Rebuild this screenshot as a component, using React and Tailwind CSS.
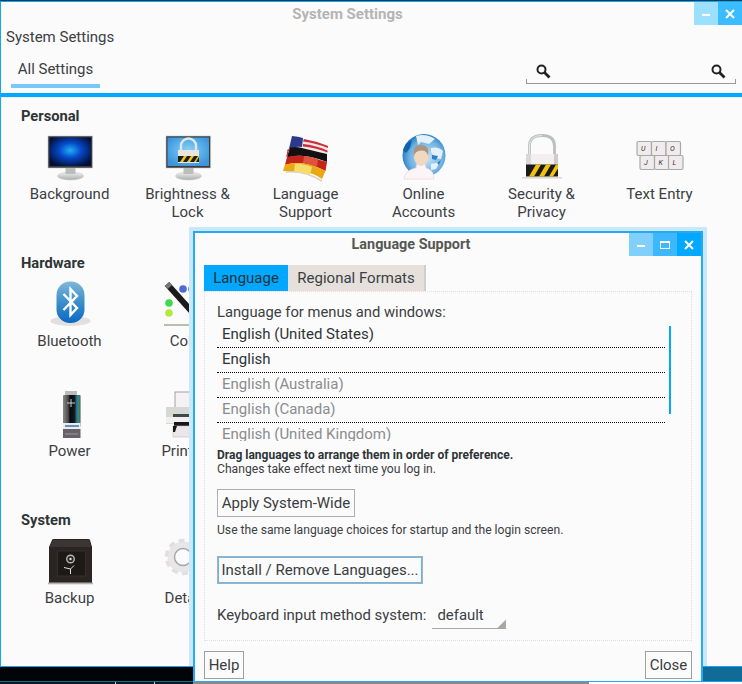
import React from "react";

const font = { fontFamily: "Roboto, sans-serif" };

// small window control buttons, the kind comes from the title bar they sit in
const WinBtn = ({ tone, kind }) => (
  <div className={`w-6 h-full flex items-center justify-center ${tone}`}>
    {kind === "min" && <div className="w-2 h-[2px] bg-white mt-[3px]" />}
    {kind === "max" && <div className="w-[10px] h-2 border border-white border-t-2" />}
    {kind === "close" && (
      <svg width="10" height="10" viewBox="0 0 10 10">
        <path d="M1 1 9 9M9 1 1 9" stroke="#fff" strokeWidth="2" />
      </svg>
    )}
  </div>
);

const SearchGlyph = () => (
  <svg width="15" height="15" viewBox="0 0 15 15">
    <circle cx="5.5" cy="5.5" r="4" fill="none" stroke="#222" strokeWidth="2" />
    <path d="M8.500 8.500 13.500 13.500" stroke="#222" strokeWidth="2.800" />
  </svg>
);

const Monitor = ({ children, id, stops }) => (
  <svg width="48" height="48" viewBox="0 0 48 48">
    <defs>
      <radialGradient id={id} cx="50%" cy="45%" r="60%">
        {stops.map((s, i) => (
          <stop key={i} offset={s[0]} stopColor={s[1]} />
        ))}
      </radialGradient>
      <linearGradient id={id + "b"} x1="0" y1="0" x2="0" y2="1">
        <stop offset="0" stopColor="#f2f2f2" />
        <stop offset="1" stopColor="#a9aeab" />
      </linearGradient>
    </defs>
    <ellipse cx="24.5" cy="42" rx="13" ry="4" fill={`url(#${id}b)`} stroke="#c5c8c6" strokeWidth="0.5" />
    <rect x="19.5" y="33" width="10" height="7" fill="#b9bdbb" />
    <rect x="2" y="2" width="44.5" height="32" fill="#3a3d40" stroke="#c8c4c4" strokeWidth="0.6" />
    <rect x="3.5" y="3.5" width="41.5" height="28.5" fill={`url(#${id})`} />
    {children}
  </svg>
);

const BackgroundIcon = () => (
  <Monitor id="bgm" stops={[[0, "#1fb0f5"], [0.45, "#0647c8"], [1, "#021038"]]} />
);

const BrightnessIcon = () => (
  <Monitor id="brm" stops={[[0, "#8fd0f6"], [0.6, "#55aeea"], [1, "#3f93d8"]]}>
    <path d="M17 17v-5a7.5 7.5 0 0 1 15 0v5" fill="none" stroke="#e3e6e6" strokeWidth="2.4" />
    <rect x="14" y="16" width="21" height="13" fill="#e8e6dc" />
    <path d="M14 22h21v6H14z" fill="#1c1c18" />
    <path d="M16 28l4-6h3l-4 6zM23 28l4-6h3l-4 6zM30 28l4-6h1v1l-3 5z" fill="#f2c414" />
  </Monitor>
);

const FlagIcon = () => (
  <svg width="48" height="48" viewBox="0 0 48 48">
    <path d="M4 38Q22 36 40 47" fill="none" stroke="#d4d0d0" strokeWidth="1.500" />
    <path d="M10 2Q18 3 27 6T46 11L45 21Q30 16 20 14T3 24Z" fill="#f5e8e8" />
    <path d="M22 5Q34 7 46 12v2Q34 9 21 7.500ZM21 10Q33 11 45.500 16.500v2Q33 13.500 21 12.500Z" fill="#c9303a" />
    <path d="M5 17 8 20 4 23 5 20ZM6 15l3 1-1 2-3-1Z" fill="#c9303a" />
    <path d="M10 2Q16 2.500 21 4L20 13Q13 12 7 15Z" fill="#2b3a8f" />
    <path d="M8 13.500Q14 12.500 20 14T45 20L45 28Q32 23 22 22T5 24Z" fill="#121010" />
    <path d="M5 23Q14 20.500 22 22T45 28L43.500 37Q32 31 22 29.500T3 31Z" fill="#c4241a" />
    <path d="M22 22Q30 23 36 25L35 33Q28 30 21 29Z" fill="#e0523c" />
    <path d="M3 30.500Q12 28 22 29.500T43.500 37L40 45Q32 39 22 38T1 37Z" fill="#eaa912" />
    <path d="M13 29.500Q20 29 30 33L28 41Q20 38 12 37.500Z" fill="#f8dc6a" />
  </svg>
);

const AccountsIcon = () => (
  <svg width="48" height="48" viewBox="0 0 48 48">
    <defs>
      <radialGradient id="glb" cx="55%" cy="55%" r="60%">
        <stop offset="0" stopColor="#cfe6f5" />
        <stop offset="0.65" stopColor="#6fb2e2" />
        <stop offset="1" stopColor="#1470bd" />
      </radialGradient>
    </defs>
    <circle cx="24" cy="21.500" r="21.500" fill="url(#glb)" />
    <path d="M16 2q10-3 19 3l-6 5-8-2-3 3ZM31 14q7-2 12 3l-2 8-6-1-4-6ZM31 30l9-2-4 7-5 1Z" fill="#e4f1fa" />
    <path d="M3 16q3-8 9-10l-2 8-4 5Z" fill="#0f62ad" />
    <path d="M32 21l6 1-2 4-4-1ZM37 29l4-3-2 5Z" fill="#2b80c8" />
    <path d="M4 45Q5 36 16 34l1-4h8l1 4Q34 36 34 45Z" fill="#fbf5f7" stroke="#ecd8de" strokeWidth="0.800" />
    <path d="M14 24Q13 13 21 13T28 24Q26 32 21 32T14 24Z" fill="#f1d9bf" />
    <path d="M14 22Q12 11 21 11T28 22Q27 16 21 16.500T14 22Z" fill="#ab9480" />
  </svg>
);

const SecurityIcon = () => (
  <svg width="48" height="48" viewBox="0 0 48 48">
    <path d="M11.500 22V12Q11.500 1.500 24 1.500T36.500 12V22" fill="none" stroke="#bcbfbf" strokeWidth="2.800" />
    <path d="M11.500 22V12Q11.500 1.500 24 1.500" fill="none" stroke="#f0f1f1" strokeWidth="0.800" />
    <rect x="8" y="20" width="32" height="12" fill="#f4eef0" />
    <rect x="8" y="20" width="5" height="12" fill="#dcd6d8" />
    <rect x="36" y="20" width="4" height="12" fill="#cfcace" />
    <rect x="8" y="30.500" width="32" height="12" fill="#1a1a16" />
    <path d="M11 42.500l7-12h5l-7 12zM21 42.500l7-12h5l-7 12zM31 42.500l7-12h2v4l-5 8z" fill="#f2c10f" />
    <path d="M4 43h40v1.500H4z" fill="#d8d8d4" />
  </svg>
);

const KeyCap = ({ x, y, w = 14.5, h = 14, l }) => (
  <g>
    <rect x={x} y={y} width={w} height={h} rx="1.500" fill="#f1ebee" stroke="#a7aba6" strokeWidth="1.200" />
    <text x={x + 4} y={y + 9.5} fontSize="7" fontStyle="italic" fill="#333" style={font}>
      {l}
    </text>
  </g>
);

const KeyboardIcon = () => (
  <svg width="48" height="48" viewBox="0 0 48 48">
    <KeyCap x={1} y={7.500} l="U" />
    <KeyCap x={15.500} y={7.500} l="I" />
    <KeyCap x={30} y={7.500} l="O" />
    <KeyCap x={4} y={21.500} l="J" />
    <KeyCap x={18.500} y={21.500} l="K" />
    <KeyCap x={32.500} y={21.500} l="L" />
  </svg>
);

const BluetoothIcon = () => (
  <svg width="48" height="48" viewBox="0 0 48 48">
    <defs>
      <linearGradient id="btg" x1="0" y1="0" x2="0" y2="1">
        <stop offset="0" stopColor="#7fb7d9" />
        <stop offset="0.5" stopColor="#3c8fc9" />
        <stop offset="1" stopColor="#0a68c4" />
      </linearGradient>
    </defs>
    <ellipse cx="24.500" cy="40" rx="20" ry="5" fill="#e3dfe0" />
    <rect x="10.500" y="0.500" width="28" height="41.500" rx="13.500" fill="url(#btg)" />
    <path d="M17.500 13 31 27 24.500 34V8L31 15 17.500 29" fill="none" stroke="#fff" strokeWidth="2.400" />
  </svg>
);

const ColorIcon = () => (
  <svg width="48" height="48" viewBox="0 0 48 48">
    <circle cx="19" cy="8" r="3.800" fill="#5169d6" />
    <circle cx="28" cy="8" r="3.800" fill="#5169d6" />
    <circle cx="5" cy="22" r="3.800" fill="#3fd94e" />
    <circle cx="5" cy="32" r="3.800" fill="#b0ea3c" />
    <path d="M3 3 30 33" stroke="#1b1b1b" strokeWidth="6" />
    <path d="M3 3 6 6" stroke="#777" strokeWidth="6" />
    <path d="M0 44H48" stroke="#6f8a60" strokeWidth="1.200" />
  </svg>
);

const PowerIcon = () => (
  <svg width="48" height="48" viewBox="0 0 48 48">
    <defs>
      <linearGradient id="pwg" x1="0" y1="0" x2="1" y2="0">
        <stop offset="0" stopColor="#8b8a8a" />
        <stop offset="0.3" stopColor="#4c4a4a" />
        <stop offset="0.4" stopColor="#0a0a0c" />
        <stop offset="0.65" stopColor="#14161c" />
        <stop offset="0.8" stopColor="#2a7ea8" />
        <stop offset="0.92" stopColor="#3f8f5a" />
        <stop offset="1" stopColor="#4a4a48" />
      </linearGradient>
    </defs>
    <rect x="19" y="0" width="12" height="5" fill="#b9bcba" />
    <rect x="17" y="4" width="17.500" height="32" rx="1" fill="url(#pwg)" />
    <path d="M21 12h8M25 8v8" stroke="#d2d2d2" strokeWidth="1" />
    <rect x="17" y="32" width="17.500" height="6" fill="#e8edf2" />
    <path d="M19 35h14" stroke="#4a6f9c" strokeWidth="1.500" />
    <rect x="17" y="38" width="17.500" height="9" fill="#67626a" />
    <path d="M19 43h13" stroke="#9a9aa0" strokeWidth="1" />
  </svg>
);

const PrinterIcon = () => (
  <svg width="48" height="48" viewBox="0 0 48 48">
    <rect x="11" y="1" width="34" height="17" fill="#f6f2f4" stroke="#8c8c8c" strokeWidth="0.800" />
    <rect x="2" y="16" width="46" height="17" fill="#d6d8d4" />
    <rect x="9" y="23" width="39" height="3" fill="#3c4a44" />
    <rect x="2" y="26" width="46" height="6" fill="#f0f0ee" />
    <rect x="10" y="31" width="38" height="4" fill="#161616" />
    <rect x="9" y="35" width="39" height="11" fill="#ece6e8" stroke="#c4c0c0" strokeWidth="0.600" />
    <path d="M9 35h4l-2 6H9Z" fill="#161616" />
  </svg>
);

const BackupIcon = () => (
  <svg width="48" height="48" viewBox="0 0 48 48">
    <path d="M6 2Q6 1 8 1H42Q44 1 44 2L46 9V45H3V9Z" fill="#2a2523" />
    <path d="M7 2H43L45.500 9H3.500Z" fill="#3b3633" />
    <rect x="11.500" y="13" width="28" height="25" fill="#1c1917" stroke="#3a3432" strokeWidth="0.800" />
    <circle cx="24.500" cy="21" r="3.800" fill="#2a2624" stroke="#b8b5b2" strokeWidth="1.400" />
    <circle cx="24.500" cy="21" r="1.200" fill="#e2e0de" />
    <path d="M24.500 36V31L28 27.500M24.500 31 18 29.500" stroke="#e4e2e0" strokeWidth="1" fill="none" />
    <rect x="2" y="44.500" width="45" height="1.800" fill="#b6b2ae" />
  </svg>
);

const DetailsIcon = () => (
  <svg width="48" height="48" viewBox="0 0 48 48">
    <circle cx="19" cy="19" r="12" fill="none" stroke="#e9e6e8" strokeWidth="7" />
    <circle cx="19" cy="19" r="16.500" fill="none" stroke="#e2dfe2" strokeWidth="3.500" strokeDasharray="6 4.400" />
    <circle cx="19" cy="19" r="8.500" fill="none" stroke="#a5a5a5" strokeWidth="1.400" />
  </svg>
);

const personal = [
  { icon: BackgroundIcon, label: "Background" },
  { icon: BrightnessIcon, label: "Brightness & Lock" },
  { icon: FlagIcon, label: "Language Support" },
  { icon: AccountsIcon, label: "Online Accounts" },
  { icon: SecurityIcon, label: "Security & Privacy" },
  { icon: KeyboardIcon, label: "Text Entry" },
];
const hardware = [
  { icon: BluetoothIcon, label: "Bluetooth" },
  { icon: ColorIcon, label: "Color" },
  null, null, null, null,
  { icon: PowerIcon, label: "Power" },
  { icon: PrinterIcon, label: "Printers" },
];
const system = [
  { icon: BackupIcon, label: "Backup" },
  { icon: DetailsIcon, label: "Details" },
];

const Section = ({ title, items, className = "" }) => (
  <div className={className}>
    <div className="h-[18px] pl-5 text-[14.7px] leading-[18px] font-bold text-[#2e3436]">{title}</div>
    <div className="mt-[9px] pl-[9.5px] grid grid-cols-[repeat(6,118px)]">
      {items.map((item, i) =>
        item ? (
          <div key={i} className="h-[110px] flex flex-col items-center">
            <div className="w-12 h-12 shrink-0">
              <item.icon />
            </div>
            <div className="mt-[3px] w-[100px] text-center text-[15px] leading-[18px] text-[#3c4043]">{item.label}</div>
          </div>
        ) : (
          <div key={i} className="h-[110px]" />
        )
      )}
    </div>
  </div>
);

const DlgButton = ({ children, className = "" }) => (
  <div className={`flex items-center justify-center border text-[15px] text-[#3a3d3f] ${className}`}>
    {children}
  </div>
);

const languages = [
  { name: "English (United States)", dim: false },
  { name: "English", dim: false },
  { name: "English (Australia)", dim: true },
  { name: "English (Canada)", dim: true },
  { name: "English (United Kingdom)", dim: true },
];

const LanguageDialog = () => (
  <div className="absolute left-[193px] top-[231px] w-[510px] h-[451px] flex flex-col bg-[#fbfbfb] border-2 border-[#25a9f0] border-b-[1px] shadow-[0_0_0_4px_#c9e9fb]">
    <div className="h-[23px] flex shrink-0">
      <div className="flex-1 pt-[2px] pr-[2px] text-center text-[14.4px] leading-[20px] font-bold text-[#555753]">Language Support</div>
      <WinBtn tone="bg-[#80d0fb]" kind="min" />
      <WinBtn tone="bg-[#3db8ff]" kind="max" />
      <WinBtn tone="bg-[#00a8ff]" kind="close" />
    </div>
    <div className="flex-1 pt-[9px] px-[9px]">
      <div className="flex h-[26px] text-[15px]">
        <div className="w-[84px] flex items-center justify-center bg-[#00a8ff] text-[#26323a]">Language</div>
        <div className="w-[138px] flex items-center justify-center bg-[#e6e0dd] border-r-2 border-[#cfcfcf] text-[#3c4043]">Regional Formats</div>
      </div>
      <div className="h-[350px] border border-dotted border-[#f0d6df] pl-3 pr-5 text-[#3c4043]">
        <div className="mt-[11px] text-[14.75px] leading-[18px]">Language for menus and windows:</div>
        <div className="relative mt-[2px] h-[118px] overflow-hidden">
          {languages.map((l) => (
            <div
              key={l.name}
              className={`h-[25px] pl-[5px] pb-[2px] mr-[6px] flex items-center text-[15px] border-b border-dotted border-black ${l.dim ? "text-[#8a8d8f]" : "text-[#2e3436]"}`}
            >
              {l.name}
            </div>
          ))}
          <div className="absolute right-[-1px] top-0 bottom-0 w-[1px] bg-[#cccccc]" />
          <div className="absolute right-[-3px] top-[3px] h-[88px] w-[5px] bg-[#00a8ff]" />
        </div>
        <div className="mt-[7px] text-[12px] leading-[15px] font-bold text-[#2e3436]">Drag languages to arrange them in order of preference.</div>
        <div className="-mt-[1px] text-[12.15px] leading-[15px]">Changes take effect next time you log in.</div>
        <DlgButton className="mt-[12px] w-[138px] h-[28px] border-[#aeaeae]">Apply System-Wide</DlgButton>
        <div className="mt-[6px] text-[12.15px] leading-[15px]">Use the same language choices for startup and the login screen.</div>
        <DlgButton className="mt-[18px] w-[206px] h-[28px] border-[#aeaeae] shadow-[inset_0_0_0_1px_#5bbcf6]">Install / Remove Languages...</DlgButton>
        <div className="mt-[19px] h-[26px] flex items-center text-[14.9px]">
          <span className="pb-[2px]">Keyboard input method system:</span>
          <div className="relative ml-[6px] w-[74px] h-[26px] pl-[5px] flex items-center border-b border-[#a3a8a3]">
            default
            <div className="absolute right-0 bottom-0 w-[9px] h-[9px] bg-[#a3aba3] [clip-path:polygon(100%_0,100%_100%,0_100%)]" />
          </div>
        </div>
      </div>
      <div className="mt-[10px] flex justify-between">
        <DlgButton className="w-[40px] h-[28px] border-[#9ca19c]">Help</DlgButton>
        <DlgButton className="w-[47px] h-[28px] border-[#9ca19c]">Close</DlgButton>
      </div>
    </div>
  </div>
);

export default function App() {
  return (
    <div className="relative w-[742px] h-[684px] overflow-hidden bg-[#020508]" style={font}>
      <div className="h-[1px] bg-[#0b3a4c]" />
      <div className="h-[666px] bg-[#fbfbfb] border-l border-t border-[#12a7f5] flex flex-col">
        <div className="h-[23px] flex shrink-0">
          <div className="flex-1 pt-[2px] text-center text-[15px] leading-[20px] font-bold text-[#b4b4b4]">System Settings</div>
          <WinBtn tone="bg-[#9be0fc]" kind="min" />
          <WinBtn tone="bg-[#3bbcff]" kind="close" />
        </div>
        <div className="h-[24px] pl-[5px] pt-[3px] text-[15px] leading-[18px] text-[#3c4043]">System Settings</div>
        <div className="h-[44px] flex items-start justify-between">
          <div className="ml-[10px] mt-[9px] w-[89px] h-[30px] border-b-4 border-[#76c9f9] text-center text-[15px] leading-[22px] text-[#3c4043]">
            All Settings
          </div>
          <div className="relative mr-[6px] mt-[14px] w-[210px] h-[21px] px-[10px] pb-[4px] flex items-center justify-between border-b border-[#999]">
            <SearchGlyph />
            <SearchGlyph />
            <div className="absolute left-0 bottom-0 w-[1px] h-[4px] bg-[#999]" />
            <div className="absolute right-0 bottom-0 w-[1px] h-[4px] bg-[#999]" />
          </div>
        </div>
        <div className="h-1 bg-[#00a8ff] shrink-0" />
        <div className="flex-1 pt-[9px] border-t border-[#ededed]">
          <Section title="Personal" items={personal} />
          <Section title="Hardware" items={hardware} className="mt-[10px]" />
          <Section title="System" items={system} className="mt-[10px]" />
        </div>
      </div>
      <LanguageDialog />
      {/* desktop showing below the windows */}
      <div className="absolute left-0 top-[666px] w-[193px] h-[18px] flex flex-col border-t border-[#12a7f5]">
        <div className="flex-1 bg-[#020508]" />
        <div className="h-[3px] bg-[#0a1a22] border-t border-[#136b8f] flex">
          <div className="ml-[115px] w-10 border-x border-[#c8c8c8]" />
        </div>
      </div>
      <div className="absolute left-[703px] right-0 top-[666px] h-[18px] flex flex-col border-t border-[#12a7f5]">
        <div className="flex-1 bg-[#126a96]" />
        <div className="h-[3px] bg-white border-t border-[#12a7f5]" />
      </div>
      <div className="absolute left-[193px] top-[682px] w-[510px] h-[2px] flex">
        <div className="w-[396px] bg-[#8a8a8a]" />
        <div className="flex-1 bg-white" />
      </div>
    </div>
  );
}
